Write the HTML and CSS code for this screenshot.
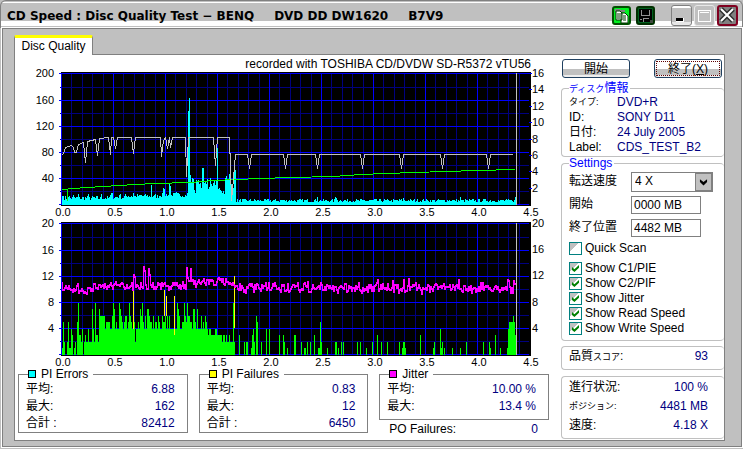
FILE: index.html
```html
<!DOCTYPE html>
<html lang="ja">
<head>
<meta charset="utf-8">
<title>CD Speed : Disc Quality Test</title>
<link rel="stylesheet" href="styles.css">
</head>
<body>
<header class="titlebar">
  <h1>CD Speed : Disc Quality Test − BENQ<span>DVD DD DW1620</span><span>B7V9</span></h1>
  <div class="tools">
    <button type="button" class="tool copy" aria-label="Copy">
      <svg viewBox="0 0 19 19"><path d="M3 3h5l1 1h4v2H8v2H5V6H3z" fill="#808080"/><path d="M4 5h4l2 2v7H4zM9 7h4l3 3v7H9z" fill="#fff" stroke="#003800"/><path d="M5 8h3M5 10h3M5 12h3M11 10h3M11 12h3M11 14h3" stroke="#003800"/></svg>
    </button>
    <button type="button" class="tool save" aria-label="Save">
      <svg viewBox="0 0 19 19"><path d="M3 3h13v13H4l-1-1z" fill="#000"/><path d="M5 4h1v6H5zM13 4h1v6h-1zM5 9h9v1H5zM4 13h2v1H4zM7 12h6v1H7zM7 12h1v4H7z" fill="#909090"/><path d="M14 14h3v3h-3z" fill="#404840"/></svg>
    </button>
  </div>
  <div class="controls">
    <button type="button" class="win" aria-label="Minimize"><svg viewBox="0 0 21 21"><path d="M5 13h8v4H5z" fill="#fff"/><path d="M5 13h7v3H5z" fill="#000"/></svg></button>
    <button type="button" class="win flat" aria-label="Maximize"><svg viewBox="0 0 21 21"><path d="M4 5h13v12H4zM6 8v7h9V8z" fill="#fff" fill-rule="evenodd"/><path d="M5 6h11v1H5zM5 7h1v9H5zM15 7h1v9h-1zM5 15h11v1H5z" fill="#c0c0c0"/></svg></button>
    <button type="button" class="win close" aria-label="Close"><svg viewBox="0 0 21 21"><path d="M4 4l12 12M16 4L4 16" stroke="#303030" stroke-width="5"/><path d="M4 4l12 12M16 4L4 16" stroke="#fff" stroke-width="2"/></svg></button>
  </div>
</header>
<main class="frame">
  <nav class="tabs"><button type="button" class="tab">Disc Quality</button></nav>
  <div class="page">
    <section class="left">
      <p class="recorded">recorded with TOSHIBA CD/DVDW SD-R5372 vTU56</p>
      <svg id="errors" class="chart" viewBox="15 67 534 150" role="img"></svg>
      <svg id="failures" class="chart" viewBox="15 67 534 150" role="img"></svg>
      <div class="stats">
        <fieldset class="stat">
          <legend><i class="key cyan"></i>PI Errors</legend>
          <dl><dt>平均:</dt><dd>6.88</dd><dt>最大:</dt><dd>162</dd><dt>合計 :</dt><dd>82412</dd></dl>
        </fieldset>
        <fieldset class="stat">
          <legend><i class="key yellow"></i>PI Failures</legend>
          <dl><dt>平均:</dt><dd>0.83</dd><dt>最大:</dt><dd>12</dd><dt>合計 :</dt><dd>6450</dd></dl>
        </fieldset>
        <div>
          <fieldset class="stat short">
            <legend><i class="key magenta"></i>Jitter</legend>
            <dl><dt>平均:</dt><dd>10.00 %</dd><dt>最大:</dt><dd>13.4 %</dd></dl>
          </fieldset>
          <dl class="po"><dt>PO Failures:</dt><dd>0</dd></dl>
        </div>
      </div>
    </section>
    <aside class="side">
      <div class="actions">
        <button type="button" class="push">開始</button>
        <button type="button" class="push focus">終了(<u>X</u>)</button>
      </div>
      <fieldset class="group disc">
        <legend><span class="kana">ディスク</span>情報</legend>
        <dl>
          <dt class="kana">タイプ:</dt><dd>DVD+R</dd>
          <dt>ID:</dt><dd>SONY D11</dd>
          <dt>日付:</dt><dd>24 July 2005</dd>
          <dt>Label:</dt><dd>CDS_TEST_B2</dd>
        </dl>
      </fieldset>
      <fieldset class="group settings">
        <legend>Settings</legend>
        <div class="row">
          <label for="speed">転送速度</label>
          <span class="combo"><select id="speed"><option>4 X</option></select><svg viewBox="0 0 16 18"><path d="M4 6l4 3 4-3v3l-4 4-4-4z"/></svg></span>
        </div>
        <div class="row"><label for="start">開始</label><input id="start" type="text" value="0000 MB"></div>
        <div class="row"><label for="end">終了位置</label><input id="end" type="text" value="4482 MB"></div>
        <div class="checks">
          <label class="quick"><input type="checkbox">Quick Scan</label>
          <label><input type="checkbox" checked>Show C1/PIE</label>
          <label><input type="checkbox" checked>Show C2/PIF</label>
          <label><input type="checkbox" checked>Show Jitter</label>
          <label><input type="checkbox" checked>Show Read Speed</label>
          <label><input type="checkbox" checked>Show Write Speed</label>
        </div>
      </fieldset>
      <section class="group result score"><dl><dt>品質<span class="kana">スコア</span>:</dt><dd>93</dd></dl></section>
      <section class="group result progress">
        <dl><dt>進行状況:</dt><dd>100 %</dd><dt class="kana">ポジション:</dt><dd>4481 MB</dd><dt>速度:</dt><dd>4.18 X</dd></dl>
      </section>
    </aside>
  </div>
</main>
<script src="charts.js"></script>
</body>
</html>
```
FILE: styles.css
```css
* { box-sizing: border-box; }
body {
  margin: 0;
  min-height: 100vh;
  display: flex;
  flex-direction: column;
  background: #c0c0c0;
  color: #000;
  font: 12px/15px "Liberation Sans", "Noto Sans CJK JP", sans-serif;
}
button, input, select { font: inherit; color: inherit; margin: 0; padding: 0; }
h1, p, dl, dt, dd, fieldset, legend { margin: 0; padding: 0; }
svg { display: block; }

.titlebar {
  height: 28px;
  display: flex;
  align-items: flex-start;
  padding: 5px 4px 0 6px;
  border: solid #808080;
  border-width: 1px 1px 0;
  border-radius: 6px 6px 0 0;
  background: linear-gradient(#c0c0c0 1px, #fff 1px 2px, #c0c0c0 2px 20px, #fff 20px 25px, #c0c0c0 25px);
}
h1 { flex: 1; font: bold 12px/20px "DejaVu Sans", sans-serif; white-space: nowrap; }
h1 span { margin-left: 20px; }
.tools, .controls { display: flex; gap: 5px; }
.tools { margin-right: 16px; }
.controls { gap: 2px; margin-top: -1px; }
.tool { width: 19px; height: 19px; border: 2px solid #005000; border-radius: 3px; background: #00a000; }
.tool svg { width: 19px; height: 19px; margin: -2px; }
.copy { background: #00f020; }
.save { background: #006020; border-color: #003000; }
.win { width: 21px; height: 21px; border: 1px solid #808080; border-radius: 3px; background: linear-gradient(#fff 2px, #c0c0c0 2px 16px, #e8e8e8 16px); }
.win svg { width: 21px; height: 21px; margin: -1px; }
.flat { border-color: #e8e8e8; background: #c0c0c0; }
.close { border: 2px solid #800020; background: #808080; }
.close svg { margin: -2px; }

.frame {
  flex: 1;
  display: flex;
  flex-direction: column;
  padding: 6px 16px 5px 11px;
  border: 1px solid #808080;
  margin: 0 1px 2px 2px;
  outline: 1px solid #fff;
}
.tabs { display: flex; }
.tab {
  height: 20px;
  width: 79px;
  border: 1px solid #808080;
  border-top: 3px solid #ff0;
  border-bottom: 0;
  border-radius: 2px 2px 0 0;
  background: #fff;
  margin-bottom: -1px;
  z-index: 1;
}
.page {
  flex: 1;
  display: grid;
  grid-template-columns: minmax(0, 1fr) 163px;
  gap: 12px;
  border: 1px solid #808080;
  background: #fff;
}
.recorded { text-align: right; padding: 2px 18px 0 0; height: 12px; line-height: 15px; }
.chart { width: 100%; height: auto; overflow: visible; shape-rendering: crispEdges; }
.chart text { font-size: 11px; }

.stats { display: grid; grid-template-columns: repeat(3, minmax(0, 1fr)); gap: 11px; padding: 0 0 0 3px; align-items: start; }
.stat { border: 1px solid #808080; min-width: 0; padding: 0 12px 0 7px; }
.stat dl { line-height: 17px; }
.short { padding-bottom: 4px; }
.stat legend { margin-left: 2px; padding-right: 5px; display: flex; align-items: center; gap: 5px; line-height: 14px; }
.key { width: 8px; height: 8px; border: 1px solid #000; }
.cyan { background: #0ff; }
.yellow { background: #ff0; }
.magenta { background: #f0f; }
dl { display: grid; grid-template-columns: auto auto; }
dd { color: #000080; }
.stat dd, .po dd, .result dd { text-align: right; }
.po { padding: 2px 11px 0 10px; }

.side { min-width: 0; }
.actions { display: flex; justify-content: space-between; padding: 4px 2px 4px 1px; }
.push {
  width: 68px;
  height: 19px;
  line-height: 16px;
  border: 1px solid #204060;
  border-radius: 3px;
  background: linear-gradient(#fff 55%, #c0c0c0 55% 90%, #eee 90%);
}
.focus { outline: 1px dotted #600000; outline-offset: -3px; }
.group { border: 1px solid #c0c0c0; border-right: 0; border-radius: 4px; padding: 0 16px 0 7px; min-width: 0; }
.group legend { color: #0000ff; line-height: 12px; padding-right: 2px; }
.kana { font-size: 9px; }
.disc dl { grid-template-columns: 48px 1fr; line-height: 15px; }
.disc { height: 75px; white-space: nowrap; }
.settings { height: 184px; padding: 1px 8px 0 7px; }
.row { display: flex; align-items: center; height: 23px; }
.row label { width: 62px; }
.row input { width: 70px; height: 18px; border: 1px solid #808080; padding-left: 2px; background: #fff; }
.combo { display: grid; width: 82px; height: 20px; border: 1px solid #808080; }
.combo select { grid-area: 1 / 1; appearance: none; border: 0; background: #fff; padding-left: 3px; }
.combo svg { grid-area: 1 / 1; justify-self: end; width: 17px; height: 18px; background: #c0c0c0; border: 1px solid #808080; pointer-events: none; }
.checks { padding-top: 2px; }
.checks label { display: flex; align-items: center; gap: 3px; height: 15px; }
.checks .quick { margin-bottom: 5px; }
.checks input {
  appearance: none;
  width: 13px;
  height: 13px;
  border: 1px solid #008080;
  background: linear-gradient(135deg, #c0c0c0 40%, #fff 40%);
}
.checks input:checked::before {
  content: "";
  display: block;
  width: 7px;
  height: 7px;
  margin: 2px;
  background: #008000;
  clip-path: polygon(0 30%, 35% 60%, 100% 0, 100% 40%, 35% 100%, 0 70%);
}
.result dl { line-height: 19px; }
.score { margin-top: 5px; height: 24px; }
.progress { margin-top: 6px; padding-top: 1px; height: 63px; }
```
FILE: charts.js
```js
const LEFT = 61, TOP = 73, BOTTOM = 204;
const ROWS = [73, 100, 126, 152, 178, 204];

function add(svg, name, attrs, text) {
  const el = document.createElementNS("http://www.w3.org/2000/svg", name);
  for (const key in attrs) el.setAttribute(key, attrs[key]);
  if (text !== undefined) el.textContent = text;
  svg.appendChild(el);
}
function rect(svg, x, y, width, height, fill) {
  add(svg, "rect", { x, y, width, height, fill });
}
function line(svg, points, stroke) {
  add(svg, "polyline", { points: points.map(p => (p[0] + 0.5) + "," + (p[1] + 0.5)).join(" "), fill: "none", stroke });
}
let seed = 7;
function noise() {
  seed = (seed * 16807) % 2147483647;
  return seed / 2147483647;
}

function frame(svg, leftLabels, rightLabels) {
  rect(svg, LEFT, 72, 470, 134, "#000");
  for (let i = 1; i < 45; i++) {
    if (i % 5) rect(svg, Math.round(LEFT + i * 10.4), TOP, 1, 132, "#000080");
  }
  ROWS.slice(1).forEach((y, i) => rect(svg, 60, Math.round((y + ROWS[i]) / 2), 469, 1, "#000080"));
  for (let i = 0; i < 9; i++) rect(svg, LEFT + i * 52, TOP, 1, 132, "#0000ff");
  ROWS.forEach(y => rect(svg, 59, y, 470, 1, "#0000ff"));
  leftLabels.forEach((t, i) => add(svg, "text", { x: 54, y: ROWS[i] + 4, "text-anchor": "end" }, t));
  const step = (BOTTOM - TOP) / (rightLabels === 8 ? 8 : 5);
  const labels = rightLabels === 8 ? [16, 14, 12, 10, 8, 6, 4, 2] : [20, 16, 12, 8, 4];
  labels.forEach((t, i) => {
    const y = Math.round(TOP + i * step);
    if (rightLabels === 8) rect(svg, 529, y, 3, 1, "#0000ff");
    add(svg, "text", { x: 532, y: y + 4 }, t);
  });
  for (let i = 0; i < 10; i++) {
    add(svg, "text", { x: 63 + i * 52, y: 216, "text-anchor": "middle" }, (i / 2).toFixed(1));
  }
}

function drawErrors() {
  const svg = document.getElementById("errors");
  frame(svg, [200, 160, 120, 80, 40], 8);
  const base = [[62, 6], [110, 7], [125, 8], [160, 9], [187, 9], [190, 24], [194, 12], [197, 21], [201, 13], [203, 22], [208, 13], [211, 20], [217, 14], [222, 12], [225, 22], [231, 18], [235, 4], [513, 4]];
  const peaks = { 62: 9, 63: 9, 69: 9, 73: 10, 78: 11, 88: 11, 101: 11, 111: 12, 112: 12, 120: 11, 133: 12, 151: 20, 163: 17, 164: 16, 169: 22, 170: 19, 176: 13, 187: 12, 188: 94, 189: 107, 190: 30, 191: 23, 196: 25, 197: 24, 202: 37, 203: 37, 210: 27, 211: 21, 213: 22, 217: 57, 225: 27, 226: 29, 227: 25, 229: 31, 234: 35, 235: 35, 317: 8, 335: 8, 336: 7, 403: 7, 460: 8, 515: 8 };
  let k = 0;
  for (let x = 62; x < 516; x++) {
    while (k + 1 < base.length && base[k + 1][0] <= x) k++;
    const range = x < 190 ? 4 : x < 235 ? 6 : 3;
    const h = peaks[x] || Math.round(base[k][1] - 1 + noise() * range);
    rect(svg, x, 205 - h, 1, h, "#00ffff");
  }
  line(svg, [[62, 189], [73, 188], [87, 187], [103, 186], [118, 185], [136, 184], [154, 183], [190, 182], [213, 180], [236, 179], [260, 178], [290, 177], [333, 176], [360, 174], [386, 173], [413, 172], [446, 171], [476, 170], [515, 169]], "#00ff00");
  rect(svg, 67, 189, 1, 12, "#00ff00");
  const speed = [[62, 155], [64, 150], [65, 147], [71, 145], [73, 147], [74, 152], [76, 152], [78, 144], [83, 142], [85, 162], [87, 141], [95, 139], [97, 155], [99, 138], [108, 137], [110, 154], [111, 137], [113, 137], [115, 148], [117, 137], [131, 137], [133, 153], [135, 137], [160, 137], [161, 156], [163, 140], [165, 137], [167, 148], [169, 137], [170, 147], [172, 137], [185, 137], [186, 176], [188, 137], [213, 137], [215, 165], [217, 137], [229, 137], [231, 200], [233, 178], [235, 154]];
  [249, 285, 317, 362, 401, 442, 488].forEach(x => speed.push([x - 2, 154], [x, 168], [x + 2, 154]));
  speed.push([512, 154]);
  line(svg, speed, "#c0c0c0");
  rect(svg, 516, TOP, 1, 132, "#c0c0c0");
}

function drawFailures() {
  const svg = document.getElementById("failures");
  frame(svg, [20, 16, 12, 8, 4], 5);
  const dense = "1520025114301205833240232242227428332766666455554468745448765456645865455244547685464776554645546544655646464444544876445586586655477547444645465434433334433333233232232223233344434448";
  const unit = 6.55;
  const bar = (x, n) => {
    const h = Math.round(n * unit);
    if (h) rect(svg, x, 205 - h, 1, h, "#00ff00");
  };
  for (let i = 0; i < 173; i++) bar(62 + i, +dense[i]);
  const sparse = "239:3 244:2 246:2 247:2 251:1 252:3 253:4 254:2 256:6 257:5 261:2 266:4 269:4 279:3 283:3 284:2 287:1 294:3 295:3 301:2 304:1 305:1 307:2 310:2 314:3 318:1 319:1 320:5 321:2 327:1 335:2 336:2 338:1 341:2 343:2 357:2 360:2 366:1 372:2 377:3 381:2 387:2 399:2 402:1 403:2 404:2 405:1 420:3 433:1 434:2 440:4 441:1 442:2 444:1 452:1 460:1 466:2 483:2 489:2 490:1 495:3 500:1 507:1 508:4 509:5 510:5 511:5 512:5 513:6 514:5 515:3";
  sparse.split(" ").forEach(s => { const [x, n] = s.split(":"); bar(+x, +n); });
  bar(233, 8);
  [[133, 4, 10], [164, 6, 10], [166, 6, 9], [174, 3, 9], [234, 4, 12]].forEach(([x, lo, hi]) =>
    rect(svg, x, Math.round(205 - hi * unit), 1, Math.round((hi - lo) * unit), "#ffff00"));
  const peaks = { 62: 132, 78: 133, 134: 124, 135: 126, 144: 116, 145: 120, 149: 118, 150: 124, 187: 117, 188: 127, 191: 118, 378: 129, 393: 130, 404: 129, 409: 128, 459: 129, 508: 129, 509: 130, 514: 130 };
  const level = x => x < 88 ? 139 : x < 96 ? 137 : x < 187 ? 135 : x < 235 ? 131 : x < 239 ? 135 : x > 430 && x < 450 ? 136 : 137;
  const points = [];
  for (let x = 62; x < 516; x++) {
    const spread = x < 235 ? 5 : 6;
    points.push([x, peaks[x] || Math.round(level(x) + (noise() + noise() - 1) * spread)]);
  }
  points.forEach(([x, y], i) => {
    const next = points[i + 1] ? points[i + 1][1] : y;
    rect(svg, x, Math.min(y, next), 1, Math.abs(y - next) + 2, "#ff00ff");
  });
  rect(svg, 516, TOP, 1, 132, "#c0c0c0");
}
drawErrors();
drawFailures();
```
